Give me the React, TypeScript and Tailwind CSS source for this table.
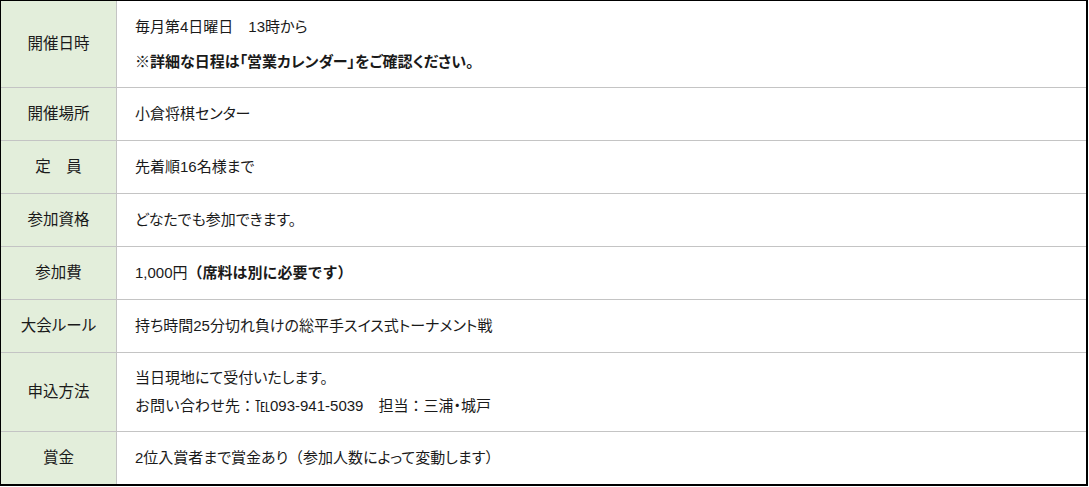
const rows: { label: string; h: string; body: React.ReactNode }[] = [
  {
    label: '開催日時',
    h: 'h-[87px]',
    body: (
      <div className="flex flex-col gap-[7px]">
        <p>毎月第4日曜日{'\u3000'}13時から</p>
        <p className="font-bold">※詳細な日程は「営業カレンダー」をご確認ください。</p>
      </div>
    ),
  },
  { label: '開催場所', h: 'h-[53px]', body: <p>小倉将棋センター</p> },
  { label: '定\u3000員', h: 'h-[53px]', body: <p>先着順16名様まで</p> },
  { label: '参加資格', h: 'h-[53px]', body: <p>どなたでも参加できます。</p> },
  {
    label: '参加費',
    h: 'h-[53px]',
    body: (
      <p className="[font-feature-settings:normal]">
        1,000円<span className="font-bold">（席料は別に必要です）</span>
      </p>
    ),
  },
  { label: '大会ルール', h: 'h-[53px]', body: <p>持ち時間25分切れ負けの総平手スイス式トーナメント戦</p> },
  {
    label: '申込方法',
    h: 'h-[79px]',
    body: (
      <div>
        <p>当日現地にて受付いたします。</p>
        <p className="[font-feature-settings:normal]">
          お問い合わせ先：℡093-941-5039{'\u3000'}担当：三浦<span className="[font-feature-settings:'palt']">・</span>城戸
        </p>
      </div>
    ),
  },
  {
    label: '賞金',
    h: 'h-[52px]',
    body: (
      <p>
        2位入賞者まで賞金あり<span className="[font-feature-settings:normal]">（</span>参加人数によって変動します
        <span className="[font-feature-settings:normal]">）</span>
      </p>
    ),
  },
];

export default function App() {
  return (
    <div className="w-[1089px] h-[487px] bg-white">
      <div
        className="w-[1088px] h-[486px] border-l border-t border-r-2 border-b-2 border-black text-[15px] leading-[28px] text-[#1a1a1a] [font-feature-settings:'palt']"
        style={{ fontFamily: '"Liberation Sans", "Noto Sans CJK JP", sans-serif' }}
      >
        {rows.map((r, i) => (
          <div
            key={r.label}
            className={`flex ${r.h} ${i < rows.length - 1 ? 'border-b border-[#c4c4c4]' : ''}`}
          >
            <div className="w-[116px] shrink-0 bg-[#e3eedb] border-r border-[#c4c4c4] flex items-center justify-center text-[15.5px]">
              {r.label}
            </div>
            <div className="flex-1 flex items-center pl-[18px]">{r.body}</div>
          </div>
        ))}
      </div>
    </div>
  );
}
